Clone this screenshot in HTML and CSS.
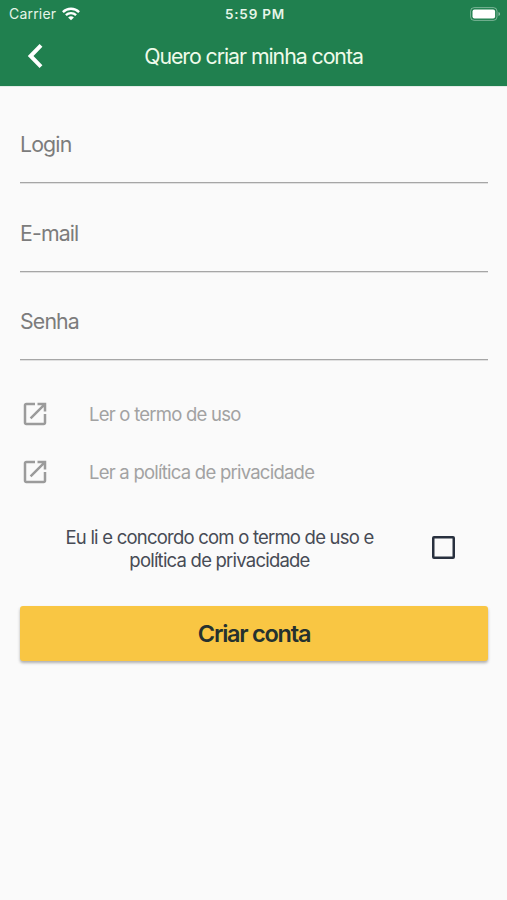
FILE: index.html
```html
<!DOCTYPE html>
<html lang="pt-BR">
<head>
<meta charset="utf-8">
<title>Quero criar minha conta</title>
<link rel="stylesheet" href="styles.css">
</head>
<body>
<header class="header">
  <div class="status">
    <div class="carrier"><span>Carrier</span>
      <svg class="wifi" width="18" height="14" viewBox="0 0 18 14" fill="none" stroke="currentColor" stroke-width="2.4"><path d="M.9 5.1C5.4.7 12.600.7 17.100 5.100M3.900 8.200C6.800 5.400 11.200 5.400 14.100 8.200"/><path d="M9 13.300L6.100 10.400Q9 7.900 11.900 10.400Z" fill="currentColor" stroke="none"/></svg>
    </div>
    <span class="time">5:59 PM</span>
    <svg class="battery" width="31" height="14" viewBox="0 0 31 14"><rect x=".6" y=".6" width="26.400" height="12.800" rx="3.600" fill="none" stroke="#fff" stroke-opacity=".4"/><rect x="2.500" y="2.500" width="22.600" height="9" rx="2" fill="#fff"/><path d="M28.500 5v4q1.600-.6 1.600-2t-1.600-2Z" fill="#fff" fill-opacity=".5"/></svg>
  </div>
  <div class="nav">
    <svg class="back" width="18" height="26" viewBox="0 0 18 26" fill="none" stroke="currentColor" stroke-width="4"><path d="M15 2.400L4.600 13L15 23.600"/></svg>
    <h1 class="title">Quero criar minha conta</h1>
  </div>
</header>
<main class="form">
  <div class="field">Login</div>
  <div class="field">E-mail</div>
  <div class="field">Senha</div>
  <div class="links">
    <a class="link"><svg class="open" viewBox="0 0 24 24"><path d="M19 19H5V5h7V3H5c-1.110 0-2 .9-2 2v14c0 1.100.89 2 2 2h14c1.100 0 2-.9 2-2v-7h-2v7zM14 3v2h3.590l-9.830 9.830 1.410 1.410L19 6.410V10h2V3h-7z"/></svg><span>Ler o termo de uso</span></a>
    <a class="link"><svg class="open" viewBox="0 0 24 24"><path d="M19 19H5V5h7V3H5c-1.110 0-2 .9-2 2v14c0 1.100.89 2 2 2h14c1.100 0 2-.9 2-2v-7h-2v7zM14 3v2h3.590l-9.830 9.830 1.410 1.410L19 6.410V10h2V3h-7z"/></svg><span>Ler a política de privacidade</span></a>
  </div>
  <div class="agree">
    <p class="agree-text">Eu li e concordo com o termo de uso e<br>política de privacidade</p>
    <span class="checkbox"></span>
  </div>
  <button class="submit">Criar conta</button>
</main>
</body>
</html>
```
FILE: styles.css
```css
* { box-sizing: border-box; }
body {
  margin: 0;
  min-height: 900px;
  background: #fafafa;
  font-family: Inter, "Liberation Sans", sans-serif;
}
.header {
  height: 86px;
  background: #20804f;
  color: #fff;
  box-shadow: 0 0 1px rgba(32, 128, 79, .6);
}
.status {
  display: grid;
  grid-template-columns: 1fr auto 1fr;
  align-items: center;
  height: 27px;
  padding: 0 6px 0 9px;
  color: #e6f5e8;
}
.carrier {
  display: flex;
  align-items: center;
  gap: 6px;
  font-size: 14px;
  letter-spacing: .2px;
}
.wifi { color: #fff; }
.time {
  font-size: 13.500px;
  font-weight: 600;
  letter-spacing: .8px;
}
.battery { justify-self: end; }
.nav {
  display: grid;
  grid-template-columns: 60px 1fr 60px;
  align-items: center;
  height: 58px;
}
.back { margin-left: 26px; }
.title {
  margin: 0;
  color: #effbea;
  font-size: 21.300px;
  font-weight: 400;
  line-height: 28px;
  letter-spacing: -1.050px;
  text-align: center;
  white-space: nowrap;
}
.form { padding: 8.500px 19.500px 0 20px; }
.field {
  height: 88.500px;
  padding-top: 35.500px;
  border-bottom: 1px solid #a6a6a6;
  box-shadow: 0 1px 0 #e0e0e0;
  color: #7c7c7c;
  font-size: 21.300px;
  line-height: 28px;
  letter-spacing: -.850px;
}
.links { padding-top: 24.500px; }
.link {
  display: flex;
  align-items: center;
  gap: 39px;
  height: 58.500px;
  color: #a2a2a2;
  font-size: 18.500px;
  letter-spacing: -.760px;
}
.open {
  width: 30px;
  height: 30px;
  fill: #9b9b9b;
}
.agree {
  display: flex;
  align-items: center;
  height: 92px;
}
.agree-text {
  width: 399px;
  margin: 0;
  padding-top: 2px;
  color: #474b55;
  font-size: 18.500px;
  line-height: 23px;
  letter-spacing: -.780px;
  text-align: center;
}
.checkbox {
  width: 23px;
  height: 23px;
  margin-left: 13px;
  border: 2px solid #28303e;
  border-radius: 2px;
  box-shadow: inset 0 0 0 .5px #28303e;
}
.submit {
  display: block;
  width: 468px;
  height: 54.500px;
  margin-top: 12.500px;
  padding: 0;
  border: 0;
  border-radius: 3px;
  background: #f9c643;
  box-shadow: 0 2px 3px rgba(0, 0, 0, .3);
  color: #25312f;
  font: 600 23.500px/55px Inter, "Liberation Sans", sans-serif;
  letter-spacing: -1.250px;
}
```
